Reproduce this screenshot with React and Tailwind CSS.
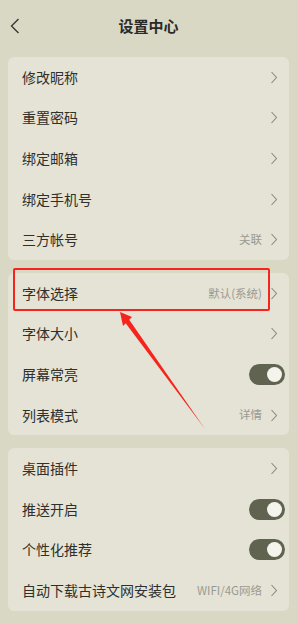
import React from "react";

const groups = [
  [
    { label: "修改昵称" },
    { label: "重置密码" },
    { label: "绑定邮箱" },
    { label: "绑定手机号" },
    { label: "三方帐号", value: "关联" },
  ],
  [
    { label: "字体选择", value: "默认(系统)" },
    { label: "字体大小" },
    { label: "屏幕常亮", toggle: true },
    { label: "列表模式", value: "详情" },
  ],
  [
    { label: "桌面插件" },
    { label: "推送开启", toggle: true },
    { label: "个性化推荐", toggle: true },
    { label: "自动下载古诗文网安装包", value: "WIFI/4G网络" },
  ],
];

function Chevron() {
  return (
    <svg width="8" height="13" viewBox="0 0 8 13" fill="none">
      <path d="M1.5 1 L6.5 6.5 L1.5 12" stroke="#8a8a82" strokeWidth="1.1" />
    </svg>
  );
}

function Toggle() {
  return (
    <div className="w-[36px] h-[21px] rounded-full bg-[#5f6350] flex items-center justify-end pr-[3px]">
      <div className="w-[15px] h-[15px] rounded-full bg-[#f4f3ec]" />
    </div>
  );
}

function Row({ item }) {
  return (
    <div className="h-[40.6px] flex items-center justify-between pl-[14px] pr-[11px]">
      <span className="text-[14px] text-[#2f2f2c]">{item.label}</span>
      {item.toggle ? (
        <div className="-mr-[7px]">
          <Toggle />
        </div>
      ) : (
        <div className="flex items-center gap-[8px]">
          {item.value && (
            <span className="text-[11.5px] text-[#9a9a92]">{item.value}</span>
          )}
          <Chevron />
        </div>
      )}
    </div>
  );
}

export default function App() {
  return (
    <div
      className="relative w-[297px] h-[624px] bg-[#d9d8c4] overflow-hidden"
      style={{ fontFamily: '"Noto Sans CJK SC", "Noto Sans", sans-serif' }}
    >
      <div className="h-[57px] relative flex items-center justify-center pb-[4px]">
        <svg
          className="absolute left-[10px] top-[18px]"
          width="10"
          height="16"
          viewBox="0 0 10 16"
          fill="none"
        >
          <path d="M8.5 1 L1.5 8 L8.5 15" stroke="#333" strokeWidth="1.3" />
        </svg>
        <span className="text-[15px] font-bold text-[#2a2a28]">设置中心</span>
      </div>

      <div className="flex flex-col gap-[13px] px-[8px]">
        {groups.map((g, i) => (
          <div key={i} className="bg-[#e5e3d5] rounded-[6px]">
            {g.map((item) => (
              <Row key={item.label} item={item} />
            ))}
          </div>
        ))}
      </div>

      {/* highlight box */}
      <div className="absolute left-[13px] top-[268px] w-[257px] h-[43px] border-2 border-[#f5241c] rounded-[2px]" />

      {/* arrow */}
      <svg className="absolute left-0 top-0" width="297" height="624" viewBox="0 0 297 624">
        <polygon points="205,429 124,321 128,318" fill="#f5241c" />
        <polygon points="120,312 132,317 123,326" fill="#f5241c" />
      </svg>
    </div>
  );
}
